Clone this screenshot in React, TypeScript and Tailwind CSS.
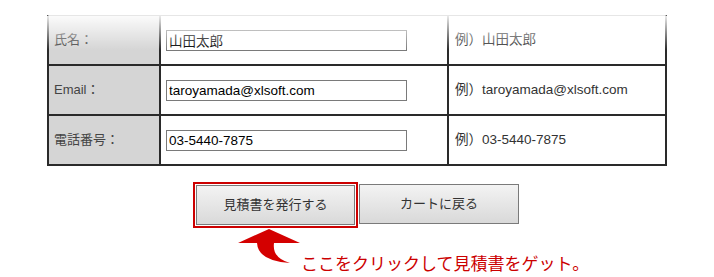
import React from 'react';

const FONT = '"Liberation Sans", "Noto Sans CJK JP", sans-serif';

interface Field {
  label: string;
  value: string;
  example: string;
}

const FIELDS: Field[] = [
  { label: '氏名：', value: '山田太郎', example: '山田太郎' },
  { label: 'Email：', value: 'taroyamada@xlsoft.com', example: 'taroyamada@xlsoft.com' },
  { label: '電話番号：', value: '03-5440-7875', example: '03-5440-7875' },
];

function FormRow({ field }: { field: Field }) {
  return (
    <div className="flex h-[50px] border-b-2 border-[#2a2a2a]">
      {/* label */}
      <div className="flex w-[112px] items-center border-r-2 border-[#2a2a2a] bg-[#d5d5d5] pl-[5px] text-[13px] text-[#444]">
        {field.label}
      </div>
      {/* input */}
      <div className="flex w-[288px] items-center border-r-2 border-[#2a2a2a] bg-white pl-[5px]">
        <input
          readOnly
          value={field.value}
          className="h-[21px] w-[241px] border border-[#7a7a7a] bg-white px-[2px] text-[13.5px] text-black outline-none"
          style={{ fontFamily: FONT }}
        />
      </div>
      {/* example */}
      <div className="flex flex-1 items-center bg-white pl-[6px] text-[13.5px] text-[#333]">
        例）{field.example}
      </div>
    </div>
  );
}

export default function App() {
  return (
    <div className="h-[277px] w-[714px] bg-white pt-[15px]" style={{ fontFamily: FONT }}>
      {/* Form table */}
      <div className="relative mx-auto w-[620px] border-x-2 border-t border-x-[#2a2a2a] border-t-[#e6e6e6]">
        {FIELDS.map((f) => (
          <FormRow key={f.label} field={f} />
        ))}
        {/* faded top edge of the screenshot */}
        <div className="pointer-events-none absolute -left-[2px] -right-[2px] top-0 h-[34px] bg-gradient-to-b from-white/90 to-white/0" />
      </div>

      {/* Buttons */}
      <div className="mt-[16px] flex gap-px pl-[193px]">
        <div className="border-2 border-[#cc0000] p-px">
          <button className="h-[40px] w-[159px] border border-[#7a7a7a] bg-gradient-to-b from-[#f3f3f3] to-[#d9d9d9] text-[13px] text-[#333]">
            見積書を発行する
          </button>
        </div>
        <div className="pt-[2px]">
          <button className="h-[40px] w-[160px] border border-[#7a7a7a] bg-gradient-to-b from-[#f3f3f3] to-[#d9d9d9] text-[13px] text-[#333]">
            カートに戻る
          </button>
        </div>
      </div>

      {/* Hint */}
      <div className="flex items-start pl-[237px]">
        <svg width="64" height="37" viewBox="0 0 64 37">
          <path d="M32 1 L63 15 L37 15 Q35 30 53 35 Q21 33 20 15 L1 15 Z" fill="#d40000" />
        </svg>
        <div className="mt-[26px] text-[17px] leading-none text-[#cc0000]" style={{ fontFamily: '"Noto Sans CJK JP", sans-serif' }}>
          ここをクリックして見積書をゲット。
        </div>
      </div>
    </div>
  );
}
